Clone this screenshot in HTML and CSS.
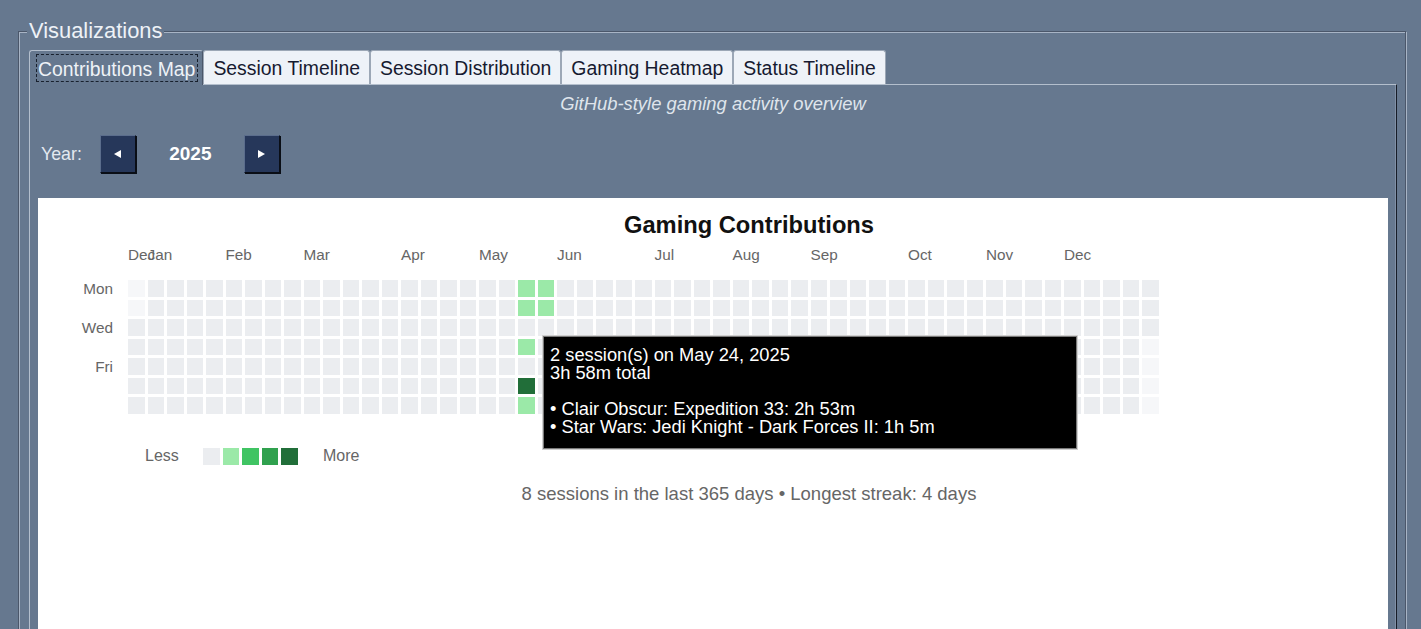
FILE: index.html
```html
<!DOCTYPE html>
<html lang="en">
<head>
<meta charset="utf-8">
<title>Visualizations</title>
<link rel="stylesheet" href="styles.css">
</head>
<body>
<div class="group">
  <div class="group-title">Visualizations</div>
  <div class="tab-strip">
    <div class="tab active"><span class="focus">Contributions Map</span></div>
    <div class="tab">Session Timeline</div>
    <div class="tab">Session Distribution</div>
    <div class="tab">Gaming Heatmap</div>
    <div class="tab">Status Timeline</div>
  </div>
  <div class="tab-panel">
    <div class="subtitle">GitHub-style gaming activity overview</div>
    <div class="year-row">
      <span class="year-label">Year:</span>
      <button class="nav-btn" aria-label="Previous year"><svg width="7" height="8" viewBox="0 0 7 8"><path d="M7 0V8L0 4Z" fill="#fff"/></svg></button>
      <span class="year">2025</span>
      <button class="nav-btn" aria-label="Next year"><svg width="7" height="8" viewBox="0 0 7 8"><path d="M0 0V8L7 4Z" fill="#fff"/></svg></button>
    </div>
    <div class="chart">
      <div class="chart-title">Gaming Contributions</div>
      <div class="months">
        <span style="grid-column:1">Dec</span>
        <span style="grid-column:2">Jan</span>
        <span style="grid-column:6">Feb</span>
        <span style="grid-column:10">Mar</span>
        <span style="grid-column:15">Apr</span>
        <span style="grid-column:19">May</span>
        <span style="grid-column:23">Jun</span>
        <span style="grid-column:28">Jul</span>
        <span style="grid-column:32">Aug</span>
        <span style="grid-column:36">Sep</span>
        <span style="grid-column:41">Oct</span>
        <span style="grid-column:45">Nov</span>
        <span style="grid-column:49">Dec</span>
      </div>
      <div class="heat">
        <div class="days"><span>Mon</span><span></span><span>Wed</span><span></span><span>Fri</span><span></span><span></span></div>
        <div class="cells" id="cells"></div>
      </div>
      <div class="legend">
        <span class="legend-label">Less</span>
        <span class="legend-cells"><i class="cell"></i><i class="cell l1"></i><i class="cell l2"></i><i class="cell l3"></i><i class="cell l4"></i></span>
        <span class="legend-label more">More</span>
      </div>
      <div class="summary">8 sessions in the last 365 days • Longest streak: 4 days</div>
      <div class="tooltip">
        <div class="tip-line">2 session(s) on May 24, 2025</div>
        <div class="tip-line">3h 58m total</div>
        <div class="tip-gap"></div>
        <div class="tip-line">• Clair Obscur: Expedition 33: 2h 53m</div>
        <div class="tip-line">• Star Wars: Jedi Knight - Dark Forces II: 1h 5m</div>
      </div>
    </div>
  </div>
</div>
<script src="script.js"></script>
</body>
</html>
```
FILE: styles.css
```css
* { box-sizing: border-box; }
html, body { margin: 0; height: 629px; overflow: hidden; }
body {
  background: #66788f;
  font-family: "Liberation Sans", Arial, sans-serif;
  color: #111;
}
.group {
  position: relative;
  margin: 31px 15px 0 18px;
  height: 640px;
  border: 1px solid #4b576a;
  box-shadow: inset 1px 1px 0 #a8b4c5, 1px 1px 0 #a8b4c5;
  padding: 18px 8px 0 10px;
}
.group-title {
  position: absolute;
  left: 8px;
  top: -14px;
  padding: 0 2px;
  background: #66788f;
  color: #eef2f7;
  font-size: 21.9px;
  line-height: 26px;
}
.tab-strip {
  display: flex;
  align-items: flex-end;
  height: 34px;
}
.tab {
  height: 34px;
  padding: 1px 9px 0;
  border: 1px solid #9ca7b6;
  border-bottom: none;
  border-radius: 3px 3px 0 0;
  background: #eef2f8;
  color: #161a30;
  font-size: 19.4px;
  line-height: 33px;
  white-space: nowrap;
}
.tab.active {
  height: 35px;
  margin-bottom: -1px;
  position: relative;
  z-index: 1;
  background: #66788f;
  border-color: #b4bfcd #4b576a #4b576a #b4bfcd;
  padding: 3px 4px 0 6px;
  color: #eef2f7;
}
.focus {
  display: block;
  height: 28px;
  border: 1px dashed #18202d;
  padding: 1px 2px 0 1px;
  line-height: 26px;
}
.tab-panel {
  border-top: 1px solid #b4bfcd;
  border-left: 1px solid #b4bfcd;
  border-right: 1px solid #161c27;
  box-shadow: inset -1px 0 0 #8190a6;
  height: 560px;
  padding-top: 7px;
}
.subtitle {
  text-align: center;
  font-style: italic;
  font-size: 18.4px;
  line-height: 24px;
  color: #dfe5ec;
}
.year-row {
  display: flex;
  align-items: center;
  height: 38px;
  margin-top: 19px;
  padding-left: 11px;
}
.year-label {
  color: #e3e9f0;
  font-size: 17.8px;
  margin-right: 18px;
}
.nav-btn {
  width: 36px;
  height: 38px;
  padding: 0;
  display: flex;
  align-items: center;
  justify-content: center;
  background: #26375a;
  border: 1px solid;
  border-color: #5b6d8c #0a0e16 #0a0e16 #5b6d8c;
  box-shadow: 1px 1px 0 #0a0e16;
}
.year {
  width: 108px;
  padding-left: 1px;
  text-align: center;
  color: #fff;
  font-weight: bold;
  font-size: 19px;
}
.chart {
  position: relative;
  margin: 25px 8px 0 8px;
  height: 500px;
  background: #fff;
}
.chart-title {
  padding: 14px 0 0 72px;
  text-align: center;
  font-weight: bold;
  font-size: 23.7px;
  line-height: 27px;
  color: #111;
}
.months {
  display: grid;
  grid-template-columns: repeat(53, 16.5px);
  column-gap: 3px;
  height: 20px;
  margin: 6px 0 0 90px;
  font-size: 15.3px;
  line-height: 20px;
  color: #666;
}
.months span { grid-row: 1; white-space: nowrap; }
.heat {
  display: flex;
  gap: 15px;
  margin-top: 15px;
}
.days {
  width: 75px;
  display: grid;
  grid-template-rows: repeat(7, 16.5px);
  row-gap: 3px;
  padding-top: 1px;
  text-align: right;
  font-size: 15.3px;
  line-height: 16.5px;
  color: #666;
}
.cells {
  display: grid;
  grid-template-rows: repeat(7, 16.5px);
  grid-auto-columns: 16.5px;
  grid-auto-flow: column;
  gap: 3px;
}
.cell {
  display: block;
  width: 16.5px;
  height: 16.5px;
  background: #ebedf0;
}
.cell.out { background: #f6f7f9; }
.cell.l1 { background: #9be9a8; }
.cell.l2 { background: #40c463; }
.cell.l3 { background: #30a14e; }
.cell.l4 { background: #216e39; }
.legend {
  display: flex;
  align-items: center;
  height: 16.5px;
  margin: 33.5px 0 0 107px;
}
.legend-label {
  font-size: 16px;
  color: #666;
  width: 35px;
}
.legend-cells {
  display: flex;
  gap: 3px;
  margin-left: 23px;
}
.legend-label.more { margin-left: 25.5px; }
.summary {
  margin-top: 18.5px;
  padding-left: 72px;
  text-align: center;
  font-size: 18.5px;
  line-height: 22px;
  color: #666;
}
.tooltip {
  position: absolute;
  left: 505px;
  top: 138px;
  width: 534px;
  height: 113px;
  background: #000;
  color: #fff;
  border: 1px solid #7a7a7a;
  box-shadow: 0 0 0 1px #cfcfcf;
  padding: 9px 6px;
  font-size: 18.3px;
  white-space: nowrap;
}
.tip-line { height: 18px; line-height: 18px; }
.tip-gap { height: 18px; }
```
FILE: script.js
```js
(function () {
  var grid = document.getElementById('cells');
  var special = {
    '0-0': 'out', '0-1': 'out',
    '52-3': 'out', '52-4': 'out', '52-5': 'out', '52-6': 'out',
    '20-0': 'l1', '20-1': 'l1', '20-3': 'l1', '20-5': 'l4', '20-6': 'l1',
    '21-0': 'l1', '21-1': 'l1'
  };
  for (var c = 0; c < 53; c++) {
    for (var r = 0; r < 7; r++) {
      var cell = document.createElement('i');
      var extra = special[c + '-' + r];
      cell.className = extra ? 'cell ' + extra : 'cell';
      grid.appendChild(cell);
    }
  }
})();
```
